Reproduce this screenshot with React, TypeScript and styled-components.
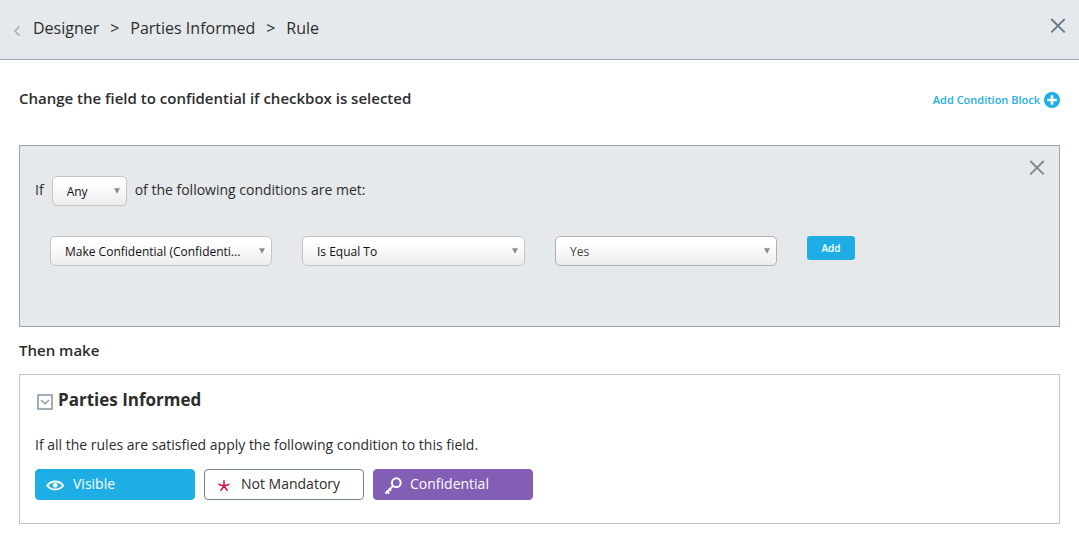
import React from "react";
import styled, { createGlobalStyle } from "styled-components";

const GlobalStyle = createGlobalStyle`
  *, *::before, *::after { box-sizing: border-box; }
  body {
    margin: 0;
    background: #fff;
    color: #2d2d2d;
    font-family: "Open Sans", "Noto Sans", sans-serif;
    font-size: 14px;
    line-height: 20px;
  }
  button, select { font-family: inherit; }
`;

const Header = styled.header`
  display: flex;
  align-items: center;
  justify-content: space-between;
  height: 60px;
  padding: 0 13px;
  background: #e5e9ec;
  border-bottom: 1px solid #9da9b1;
`;

const Breadcrumb = styled.nav`
  display: flex;
  align-items: center;
  padding-bottom: 4px;
  font-size: 16px;
  line-height: 24px;
`;

const BackButton = styled.button`
  display: flex;
  padding: 6px 0 0;
  margin-right: 12px;
  border: 0;
  background: none;
  cursor: pointer;
`;

const Crumb = styled.a`
  color: inherit;
  text-decoration: none;
`;

const Separator = styled.span`
  width: 31px;
  text-align: center;
`;

const CloseButton = styled.button`
  display: flex;
  padding: 0;
  border: 0;
  background: none;
  color: ${(p) => p.color};
  cursor: pointer;
`;

const HeaderClose = styled.div`
  padding-bottom: 8px;
`;

const Content = styled.main`
  padding: 28px 19px 19px;
`;

const TitleRow = styled.div`
  display: flex;
  align-items: center;
  justify-content: space-between;
  height: 24px;
`;

const Title = styled.h1`
  margin: 0;
  padding-bottom: 4px;
  font-size: 15px;
  line-height: 20px;
  font-weight: 650;
`;

const AddBlockButton = styled.button`
  display: flex;
  align-items: center;
  gap: 4px;
  padding: 0;
  border: 0;
  background: none;
  color: #1eaee5;
  font-size: 11px;
  line-height: 16px;
  font-weight: 600;
  cursor: pointer;
`;

const ConditionBlock = styled.section`
  margin-top: 33px;
  padding: 14px 14px 60px;
  background: #e5e9ec;
  border: 1px solid #9da9b1;
`;

const MatchRow = styled.div`
  display: flex;
  align-items: flex-start;
  justify-content: space-between;
`;

const MatchSentence = styled.div`
  display: flex;
  align-items: center;
  gap: 8px;
  padding: 16px 0 0 1px;
`;

const MatchText = styled.label`
  padding-bottom: 2px;
`;

const ConditionRow = styled.div`
  display: flex;
  align-items: flex-start;
  gap: 30px;
  margin-top: 30px;
  padding-left: 16px;
`;

const SelectBox = styled.div<{ $width: number }>`
  display: grid;
  flex: 0 1 ${(p) => p.$width}px;
  width: ${(p) => p.$width}px;
  min-width: 0;
  align-items: center;

  > * { grid-area: 1 / 1; }
  > svg {
    justify-self: end;
    margin: 0 7px 1px 0;
    pointer-events: none;
  }
`;

const SelectControl = styled.select<{ $focused?: boolean }>`
  appearance: none;
  width: 100%;
  height: 30px;
  padding: 1px 20px 0 14px;
  border: 1px solid ${(p) => (p.$focused ? "#b0b0b0" : "#c5c5c5")};
  border-radius: 5px;
  background: linear-gradient(#fff 20%, #ededed);
  color: ${(p) => (p.$focused ? "#444" : "#111")};
  font-size: 12px;
  line-height: 18px;
`;

const AddButton = styled.button`
  width: 48px;
  height: 24px;
  padding: 0;
  border: 0;
  border-radius: 3px;
  background: #1eaee5;
  color: #fff;
  font-size: 10px;
  line-height: 16px;
  font-weight: 600;
  cursor: pointer;
`;

const ThenTitle = styled.h2`
  margin: 13px 0 14px;
  font-size: 15px;
  line-height: 20px;
  font-weight: 650;
`;

const ResultPanel = styled.section`
  padding: 13px 15px 23px;
  border: 1px solid #c5c5c5;
`;

const FieldHeading = styled.div`
  display: flex;
  align-items: center;
  gap: 5px;
`;

const Expander = styled.button`
  display: flex;
  padding: 4px 0 0 2px;
  border: 0;
  background: none;
  cursor: pointer;
`;

const FieldName = styled.h3`
  margin: 0;
  font-size: 17px;
  line-height: 24px;
  font-weight: 700;
`;

const Hint = styled.p`
  margin: 23px 0 14px;
`;

const Actions = styled.div`
  display: flex;
  gap: 9px;
`;

const tones = {
  visible: { background: "#1eaee5", border: "#1eaee5", color: "#fff" },
  plain: { background: "#fff", border: "#77838c", color: "#2d2d2d" },
  confidential: { background: "#835eb5", border: "#835eb5", color: "#fff" },
};

const ActionButton = styled.button<{ $tone: keyof typeof tones }>`
  display: flex;
  align-items: center;
  gap: 8px;
  flex: 0 1 160px;
  height: 31px;
  padding: 0 10px 1px;
  border: 1px solid ${(p) => tones[p.$tone].border};
  border-radius: 4px;
  background: ${(p) => tones[p.$tone].background};
  color: ${(p) => tones[p.$tone].color};
  font-size: 14px;
  line-height: 20px;
  white-space: nowrap;
  cursor: pointer;

  svg { flex: none; margin-top: 3px; }
`;

const Cross = () => (
  <svg width="16" height="16" viewBox="0 0 16 16" fill="none" stroke="currentColor" strokeWidth="1.9">
    <path d="M1.300 1 14.700 14.400M14.700 1 1.300 14.400" />
  </svg>
);

interface SelectProps {
  id: string;
  label?: string;
  width: number;
  options: string[];
  focused?: boolean;
}

const Select = ({ id, label, width, options, focused }: SelectProps) => (
  <SelectBox $width={width}>
    <SelectControl id={id} aria-label={label} $focused={focused}>
      {options.map((o) => (
        <option key={o}>{o}</option>
      ))}
    </SelectControl>
    <svg width="6" height="6" viewBox="0 0 6 6">
      <path d="M0 .3h6L3 5.800z" fill="#8c8c8c" />
    </svg>
  </SelectBox>
);

export default function App() {
  return (
    <>
      <GlobalStyle />
      <Header>
        <Breadcrumb aria-label="Breadcrumb">
          <BackButton aria-label="Back">
            <svg width="8" height="12" viewBox="0 0 8 12" fill="none" stroke="#a3adb5" strokeWidth="1.5">
              <path d="M6.500 1.200 2 6l4.500 4.800" />
            </svg>
          </BackButton>
          <Crumb href="#designer">Designer</Crumb>
          <Separator>&gt;</Separator>
          <Crumb href="#parties">Parties Informed</Crumb>
          <Separator>&gt;</Separator>
          <span>Rule</span>
        </Breadcrumb>
        <HeaderClose>
          <CloseButton aria-label="Close" color="#657a8a">
            <Cross />
          </CloseButton>
        </HeaderClose>
      </Header>

      <Content>
        <TitleRow>
          <Title>Change the field to confidential if checkbox is selected</Title>
          <AddBlockButton>
            Add Condition Block
            <svg width="16" height="16" viewBox="0 0 16 16">
              <circle cx="8" cy="8" r="8" fill="#1eaee5" />
              <path d="M8 3.200v9.600M3.200 8h9.600" stroke="#fff" strokeWidth="2.600" />
            </svg>
          </AddBlockButton>
        </TitleRow>

        <ConditionBlock>
          <MatchRow>
            <MatchSentence>
              <MatchText htmlFor="match">If</MatchText>
              <Select id="match" width={75} options={["Any", "All"]} />
              <MatchText htmlFor="match">of the following conditions are met:</MatchText>
            </MatchSentence>
            <CloseButton aria-label="Remove block" color="#7f8a92">
              <Cross />
            </CloseButton>
          </MatchRow>
          <ConditionRow>
            <Select id="field" label="Field" width={222} options={["Make Confidential (Confidenti..."]} />
            <Select id="operator" label="Operator" width={223} options={["Is Equal To"]} />
            <Select id="value" label="Value" width={222} options={["Yes", "No"]} focused />
            <AddButton>Add</AddButton>
          </ConditionRow>
        </ConditionBlock>

        <ThenTitle>Then make</ThenTitle>

        <ResultPanel>
          <FieldHeading>
            <Expander aria-label="Collapse">
              <svg width="16" height="16" viewBox="0 0 16 16" fill="none" stroke="#8a9aa5">
                <rect x="1" y="1" width="14" height="14" strokeWidth="1.600" />
                <path d="M4 6l4 3.800L12 6" strokeWidth="1.200" />
              </svg>
            </Expander>
            <FieldName>Parties Informed</FieldName>
          </FieldHeading>
          <Hint>If all the rules are satisfied apply the following condition to this field.</Hint>
          <Actions>
            <ActionButton $tone="visible">
              <svg width="19" height="12" viewBox="0 0 19 12" fill="none" stroke="#fff">
                <path d="M1.200 5.500C3.200 2.800 6 1.500 9.200 1.500S15.200 2.800 17.200 5.500C15.200 8.200 12.400 9.500 9.200 9.500S3.200 8.200 1.200 5.500z" strokeWidth="1.900" />
                <circle cx="9.200" cy="5.300" r="2.400" fill="#fff" stroke="none" />
              </svg>
              Visible
            </ActionButton>
            <ActionButton $tone="plain">
              <svg width="18" height="14" viewBox="0 0 18 14" fill="none" stroke="#dc1446" strokeWidth="1.600">
                <path d="M9 7V1.200M9 7 3.500 5.300M9 7l5.500-1.700M9 7l-3.500 4.700M9 7l3.500 4.700" />
              </svg>
              Not Mandatory
            </ActionButton>
            <ActionButton $tone="confidential">
              <svg width="18" height="18" viewBox="0 0 19 19" fill="none" stroke="#fff" strokeWidth="2.100">
                <circle cx="13" cy="6" r="4.600" />
                <path d="M9.700 9.300 1.500 17.500M2.500 14.500l3 3M5 12l2.500 2.500" />
              </svg>
              Confidential
            </ActionButton>
          </Actions>
        </ResultPanel>
      </Content>
    </>
  );
}
